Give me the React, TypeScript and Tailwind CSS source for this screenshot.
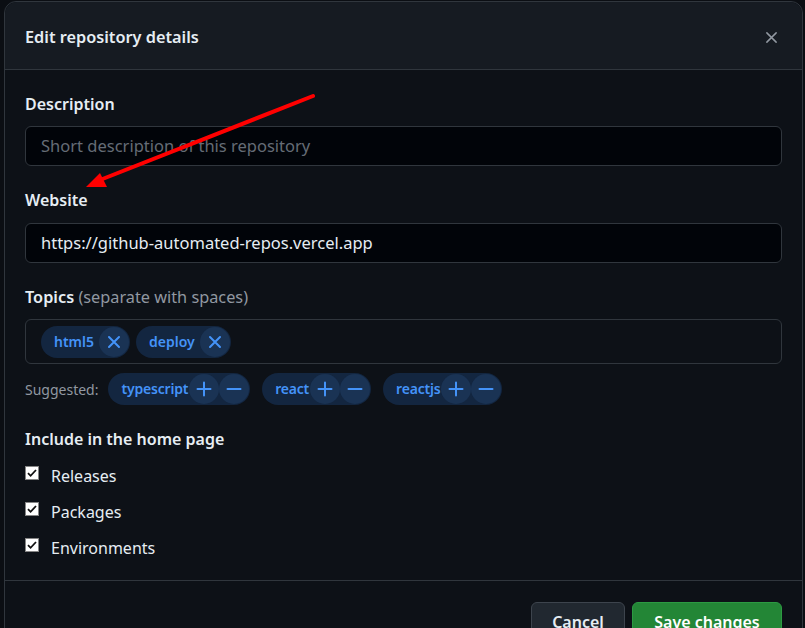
import React from "react";

const font = { fontFamily: '"Noto Sans", "Liberation Sans", sans-serif' };

function XIcon({ size = 14, stroke = "#4493f8", width = 2 }: { size?: number; stroke?: string; width?: number }) {
  return (
    <svg width={size} height={size} viewBox="0 0 14 14" fill="none">
      <path d="M2 2 L12 12 M12 2 L2 12" stroke={stroke} strokeWidth={width} strokeLinecap="round" />
    </svg>
  );
}

function Plus() {
  return (
    <svg width="16" height="16" viewBox="0 0 16 16" fill="none">
      <path d="M8 1.5 V14.5 M1.5 8 H14.5" stroke="#4493f8" strokeWidth="2" strokeLinecap="round" />
    </svg>
  );
}

function Minus() {
  return (
    <svg width="16" height="16" viewBox="0 0 16 16" fill="none">
      <path d="M1.5 8 H14.5" stroke="#4493f8" strokeWidth="2" strokeLinecap="round" />
    </svg>
  );
}

function Chip({ label }: { label: string }) {
  return (
    <div className="flex items-center h-[32px] rounded-full bg-[#132640] p-[1px] pl-[13px]">
      <span className="text-[14px] font-semibold text-[#4493f8] leading-none">{label}</span>
      <span className="ml-[5px] flex h-[30px] w-[30px] items-center justify-center rounded-full bg-[#1a3354]">
        <XIcon />
      </span>
    </div>
  );
}

function Suggest({ label }: { label: string }) {
  return (
    <div className="flex items-center h-[32px] rounded-full bg-[#132640] p-[1px] pl-[13px]">
      <span className="text-[14px] font-semibold text-[#4493f8] leading-none tracking-[-0.2px]">{label}</span>
      <span className="ml-[1px] flex h-[30px] w-[30px] items-center justify-center rounded-full bg-[#1a3354]">
        <Plus />
      </span>
      <span className="flex h-[30px] w-[30px] items-center justify-center rounded-full bg-[#1a3354]">
        <Minus />
      </span>
    </div>
  );
}

function Check({ label }: { label: string }) {
  return (
    <div className="flex items-center h-[24px]">
      <svg width="14" height="14" viewBox="0 0 14 14" className="mt-[-6px]">
        <rect x="0.5" y="0.5" width="13" height="13" fill="#ffffff" stroke="#858585" />
        <path d="M3 7.2 L5.6 9.8 L11 4" stroke="#111111" strokeWidth="1.8" fill="none" />
      </svg>
      <span className="ml-[12px] text-[16px] text-[#e6edf3]">{label}</span>
    </div>
  );
}

export default function App() {
  return (
    <div className="relative h-[628px] w-[805px] overflow-hidden bg-[#0b0e13] pl-[4px] pt-[1px]" style={font}>
      <div className="w-[799px] rounded-t-[12px] border border-[#30363d] bg-[#0d1117]">
        <div className="flex h-[68px] items-center justify-between rounded-t-[12px] border-b border-[#30363d] bg-[#161b22] pl-[20px] pr-[24px] pt-[3px]">
          <span className="text-[16.3px] font-semibold text-[#e6edf3]">Edit repository details</span>
          <XIcon size={13} stroke="#9198a1" width={1.6} />
        </div>
        <div className="px-[20px] pt-[22px] pb-[20px]">
          <div className="h-[24px] text-[16px] font-semibold leading-[24px] text-[#e6edf3]">Description</div>
          <div className="mt-[10px] flex h-[40px] items-center rounded-[6px] border border-[#30363d] bg-[#010409] px-[15px] text-[16.5px] text-[#656c76]">
            Short description of this repository
          </div>
          <div className="mt-[22px] h-[24px] text-[16px] font-semibold leading-[24px] text-[#e6edf3]">Website</div>
          <div className="mt-[11px] flex h-[40px] items-center rounded-[6px] border border-[#30363d] bg-[#010409] px-[15px] text-[16.5px] text-[#e6edf3]">
            https://github-automated-repos.vercel.app
          </div>
          <div className="mt-[22px] h-[24px] text-[16.3px] leading-[24px] text-[#e6edf3]">
            <span className="font-semibold">Topics</span>{" "}
            <span className="text-[#9198a1]">(separate with spaces)</span>
          </div>
          <div className="mt-[10px] flex h-[45px] items-center gap-[6px] rounded-[6px] border border-[#30363d] bg-[#0d1117] px-[15px]">
            <Chip label="html5" />
            <Chip label="deploy" />
          </div>
          <div className="mt-[9px] flex items-center">
            <span className="mr-[10px] text-[14px] text-[#9198a1]">Suggested:</span>
            <div className="flex items-center gap-[12px]">
              <Suggest label="typescript" />
              <Suggest label="react" />
              <Suggest label="reactjs" />
            </div>
          </div>
          <div className="mt-[22px] h-[24px] text-[16px] font-semibold leading-[24px] text-[#e6edf3]">Include in the home page</div>
          <div className="mt-[13px] flex flex-col gap-[12px]">
            <Check label="Releases" />
            <Check label="Packages" />
            <Check label="Environments" />
          </div>
        </div>
        <div className="flex justify-end gap-[7px] border-t border-[#30363d] px-[20px] pt-[21px] pb-[20px]">
          <button className="h-[40px] w-[94px] rounded-[6px] border border-[#3d444d] bg-[#212830] text-[16px] font-semibold text-[#e6edf3]">
            Cancel
          </button>
          <button className="h-[40px] w-[150px] rounded-[6px] border border-[#2c9a42] bg-[#238636] text-[16px] font-semibold text-white">
            Save changes
          </button>
        </div>
      </div>
      <svg className="pointer-events-none absolute left-0 top-0" width="805" height="628">
        <line x1="313" y1="96" x2="100" y2="180" stroke="#ff0000" strokeWidth="4" strokeLinecap="round" />
        <polygon points="86,187 100,173 107,187" fill="#ff0000" />
      </svg>
    </div>
  );
}
